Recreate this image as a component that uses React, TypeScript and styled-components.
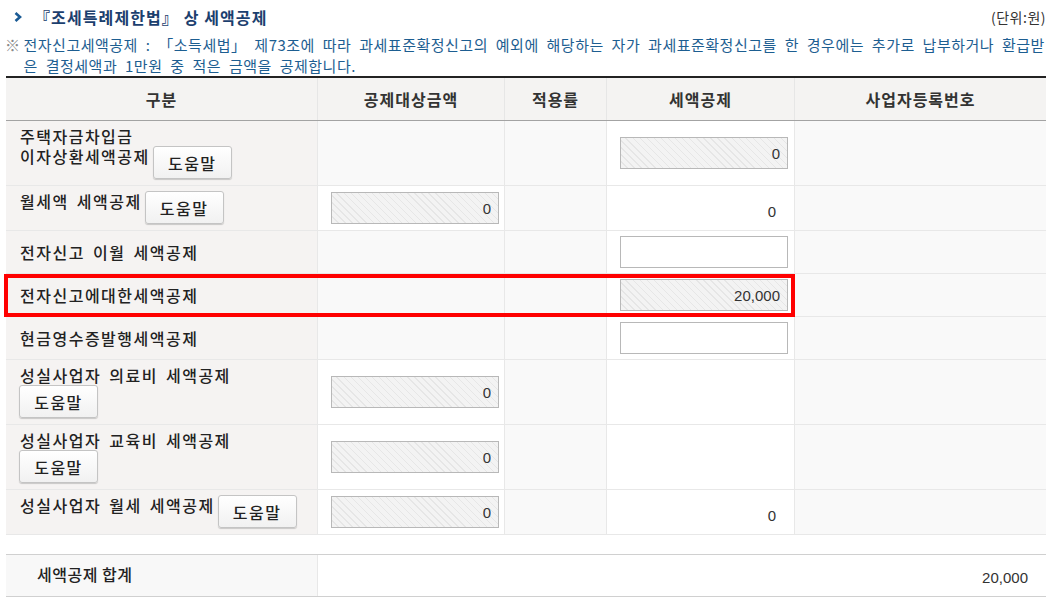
import React from 'react';
import styled, { createGlobalStyle, css } from 'styled-components';

const GlobalStyle = createGlobalStyle`
  body {
    margin: 0;
    background: #fff;
    font-family: "Noto Sans CJK KR", "Noto Sans", sans-serif;
    color: #333;
  }
`;

const COLS = '312px 187px 102px 188px 1fr';

const Page = styled.div`
  padding: 0 8px 0 6px;
  width: 1040px;
`;

const TitleBar = styled.div`
  display: flex;
  align-items: center;
  justify-content: space-between;
  height: 34px;
`;

const Title = styled.h3`
  display: flex;
  align-items: center;
  gap: 12px;
  margin: 0 0 0 8px;
  font-size: 16px;
  font-weight: 700;
  color: #1c3f6e;
  letter-spacing: 1.1px;
`;

const Unit = styled.span`
  font-size: 14px;
  color: #333;
  letter-spacing: 0.5px;
`;

const Note = styled.div`
  display: flex;
  gap: 3px;
  margin-left: -1px;
  font-size: 15px;
  line-height: 21px;
  letter-spacing: 0.5px;
  word-spacing: 4px;
  color: #1d5e91;
  white-space: nowrap;
`;

const Mark = styled.span`
  color: #8a8a8a;
`;

const Table = styled.div`
  border-top: 2px solid #222;
`;

const HeadRow = styled.div`
  display: grid;
  grid-template-columns: ${COLS};
  border-bottom: 1px solid #a3a3a3;
`;

const HeadCell = styled.div`
  height: 42px;
  display: flex;
  align-items: center;
  justify-content: center;
  background: #f4f3f2;
  border-right: 1px solid #e6e6e6;
  font-size: 16px;
  font-weight: 700;
  letter-spacing: 1px;
  color: #333;
  &:last-child { border-right: none; }
`;

const Row = styled.div<{ $highlight?: boolean }>`
  display: grid;
  grid-template-columns: ${COLS};
  border-bottom: 1px solid #e8e8e8;
  position: relative;
  ${p => p.$highlight && css`
    &::after {
      content: '';
      position: absolute;
      left: -2px;
      top: 0;
      bottom: -1px;
      width: 791px;
      box-sizing: border-box;
      border: 4px solid #f00;
      pointer-events: none;
    }
  `}
`;

type Tone = 'label' | 'empty' | 'white';
const bgOf: Record<Tone, string> = { label: '#f5f3f2', empty: '#f9f9f9', white: '#fff' };

const Cell = styled.div<{ $tone: Tone }>`
  display: flex;
  align-items: center;
  min-height: 42px;
  box-sizing: border-box;
  background: ${p => bgOf[p.$tone]};
  border-right: 1px solid #e8e8e8;
  &:last-child { border-right: none; }
`;

const LabelCell = styled(Cell)`
  padding: 5px 0 6px 14px;
`;

const LabelText = styled.div`
  font-size: 16px;
  font-weight: 500;
  line-height: 20px;
  letter-spacing: 1.5px;
  word-spacing: 3px;
  color: #222;
  white-space: nowrap;
`;

const HelpButton = styled.button<{ $wrap?: boolean }>`
  display: inline-block;
  vertical-align: top;
  width: 79px;
  height: 33px;
  margin-left: ${p => (p.$wrap ? '-1px' : '3px')};
  padding: 0;
  border: 1px solid #c4c4c4;
  border-radius: 3px;
  background: linear-gradient(#ffffff, #f1f1f1);
  box-shadow: 0 1px 1px rgba(0, 0, 0, 0.18);
  font-family: inherit;
  font-size: 16px;
  font-weight: 500;
  letter-spacing: 1.5px;
  color: #222;
`;

const ValueCell = styled(Cell)`
  padding-left: 13px;
`;

const PlainValue = styled(Cell)`
  justify-content: flex-end;
  padding: 6px 18px 0 0;
  font-family: "Liberation Sans", Arial, sans-serif;
  font-size: 15px;
  color: #333;
`;

const Amount = styled.input<{ $locked?: boolean }>`
  width: 168px;
  height: 32px;
  box-sizing: border-box;
  border: 1px solid #b8b8b8;
  padding: 0 7px;
  text-align: right;
  font-family: "Liberation Sans", Arial, sans-serif;
  font-size: 15px;
  color: #333;
  outline: none;
  background: ${p =>
    p.$locked
      ? 'repeating-linear-gradient(45deg, #f3f3f3 0px, #f3f3f3 4px, #e6e6e6 4px, #e6e6e6 5px)'
      : '#fff'};
`;

const Summary = styled.div`
  display: grid;
  grid-template-columns: 312px 1fr;
  margin-top: 19px;
  border-top: 1px solid #d0d0d0;
  border-bottom: 1px solid #d0d0d0;
`;

const SumLabel = styled.div`
  height: 41px;
  display: flex;
  align-items: center;
  padding: 0 0 3px 31px;
  box-sizing: border-box;
  background: #f8f8f8;
  border-right: 1px solid #e8e8e8;
  font-size: 16px;
  font-weight: 500;
  letter-spacing: 0.5px;
  color: #222;
`;

const SumValue = styled.div`
  display: flex;
  align-items: center;
  justify-content: flex-end;
  padding: 4px 18px 0 0;
  font-family: "Liberation Sans", Arial, sans-serif;
  font-size: 15px;
  color: #333;
`;

const Chevron = () => (
  <svg width="8" height="10" viewBox="0 0 8 10">
    <polyline points="1.5,1 6,5 1.5,9" fill="none" stroke="#1b5b95" strokeWidth="2.6" />
  </svg>
);

const Help = ({ wrap }: { wrap?: boolean }) => <HelpButton $wrap={wrap}>도움말</HelpButton>;

const Input = ({ value, locked }: { value?: string; locked?: boolean }) => (
  <Amount readOnly value={value ?? ''} $locked={locked} />
);

export default function App() {
  return (
    <Page>
      <GlobalStyle />
      <TitleBar>
        <Title>
          <Chevron />
          『조세특례제한법』 상 세액공제
        </Title>
        <Unit>(단위:원)</Unit>
      </TitleBar>
      <Note>
        <Mark>※</Mark>
        <div>
          전자신고세액공제 : 「소득세법」 제73조에 따라 과세표준확정신고의 예외에 해당하는 자가 과세표준확정신고를 한 경우에는 추가로 납부하거나 환급받
          <br />
          은 결정세액과 1만원 중 적은 금액을 공제합니다.
        </div>
      </Note>

      <Table>
        <HeadRow>
          <HeadCell>구분</HeadCell>
          <HeadCell>공제대상금액</HeadCell>
          <HeadCell>적용률</HeadCell>
          <HeadCell>세액공제</HeadCell>
          <HeadCell>사업자등록번호</HeadCell>
        </HeadRow>

        <Row>
          <LabelCell $tone="label">
            <LabelText>
              주택자금차입금
              <br />
              이자상환세액공제<Help />
            </LabelText>
          </LabelCell>
          <Cell $tone="empty" />
          <Cell $tone="empty" />
          <ValueCell $tone="white"><Input value="0" locked /></ValueCell>
          <Cell $tone="empty" />
        </Row>

        <Row>
          <LabelCell $tone="label">
            <LabelText>월세액 세액공제<Help /></LabelText>
          </LabelCell>
          <ValueCell $tone="white"><Input value="0" locked /></ValueCell>
          <Cell $tone="empty" />
          <PlainValue $tone="white">0</PlainValue>
          <Cell $tone="empty" />
        </Row>

        <Row>
          <LabelCell $tone="label">
            <LabelText>전자신고 이월 세액공제</LabelText>
          </LabelCell>
          <Cell $tone="empty" />
          <Cell $tone="empty" />
          <ValueCell $tone="white"><Input /></ValueCell>
          <Cell $tone="empty" />
        </Row>

        <Row $highlight>
          <LabelCell $tone="label">
            <LabelText>전자신고에대한세액공제</LabelText>
          </LabelCell>
          <Cell $tone="empty" />
          <Cell $tone="empty" />
          <ValueCell $tone="white"><Input value="20,000" locked /></ValueCell>
          <Cell $tone="empty" />
        </Row>

        <Row>
          <LabelCell $tone="label">
            <LabelText>현금영수증발행세액공제</LabelText>
          </LabelCell>
          <Cell $tone="empty" />
          <Cell $tone="empty" />
          <ValueCell $tone="white"><Input /></ValueCell>
          <Cell $tone="empty" />
        </Row>

        <Row>
          <LabelCell $tone="label">
            <LabelText>
              성실사업자 의료비 세액공제
              <br />
              <Help wrap />
            </LabelText>
          </LabelCell>
          <ValueCell $tone="white"><Input value="0" locked /></ValueCell>
          <Cell $tone="empty" />
          <Cell $tone="white" />
          <Cell $tone="empty" />
        </Row>

        <Row>
          <LabelCell $tone="label">
            <LabelText>
              성실사업자 교육비 세액공제
              <br />
              <Help wrap />
            </LabelText>
          </LabelCell>
          <ValueCell $tone="white"><Input value="0" locked /></ValueCell>
          <Cell $tone="empty" />
          <Cell $tone="white" />
          <Cell $tone="empty" />
        </Row>

        <Row>
          <LabelCell $tone="label">
            <LabelText>성실사업자 월세 세액공제<Help /></LabelText>
          </LabelCell>
          <ValueCell $tone="white"><Input value="0" locked /></ValueCell>
          <Cell $tone="empty" />
          <PlainValue $tone="white">0</PlainValue>
          <Cell $tone="empty" />
        </Row>
      </Table>

      <Summary>
        <SumLabel>세액공제 합계</SumLabel>
        <SumValue>20,000</SumValue>
      </Summary>
    </Page>
  );
}
